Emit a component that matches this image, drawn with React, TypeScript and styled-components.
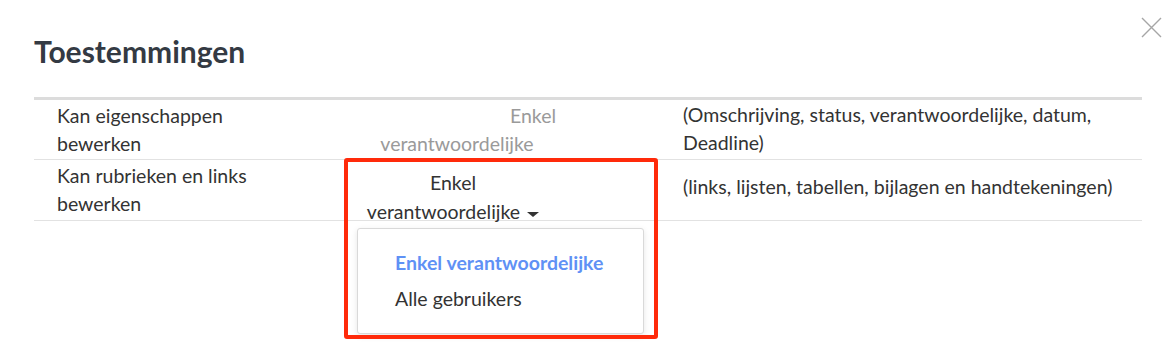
import React from 'react';
import styled, { createGlobalStyle } from 'styled-components';

const GlobalStyle = createGlobalStyle`
  html, body {
    margin: 0;
    padding: 0;
    background: #fff;
  }
  body {
    font-family: Lato, "Open Sans", sans-serif;
    color: #333;
  }
`;

const Modal = styled.div`
  position: relative;
  width: 1174px;
  height: 342px;
  padding: 33px 32px 0 34px;
  box-sizing: border-box;
  background: #fff;
`;

const Title = styled.h2`
  margin: 0 0 28px;
  font-size: 30px;
  line-height: 36px;
  font-weight: 700;
  color: #343a43;
`;

const CloseButton = styled.button`
  position: absolute;
  top: 17px;
  right: 12px;
  width: 21px;
  height: 21px;
  padding: 0;
  border: 0;
  background: none;
  cursor: pointer;
`;

const Table = styled.div`
  border-top: 3px solid #dcdcdc;
`;

const Row = styled.div<{ $height: number }>`
  display: grid;
  grid-template-columns: 276px 360px 1fr;
  align-items: start;
  height: ${(p) => p.$height}px;
  border-bottom: 1px solid #e2e2e2;
  font-size: 19.5px;
  line-height: 28px;
`;

const LabelCell = styled.div`
  padding: 2px 40px 0 23px;
`;

const ValueCell = styled.div<{ $pt: number; $pr: number }>`
  position: relative;
  padding: ${(p) => p.$pt}px ${(p) => p.$pr}px 0 0;
  display: flex;
  justify-content: center;
`;

const ValueText = styled.div<{ $muted?: boolean; $indent?: number }>`
  width: 190px;
  text-align: center;
  color: ${(p) => (p.$muted ? '#9a9a9a' : '#333')};
  text-indent: ${(p) => p.$indent ?? 0}px;
`;

const Trigger = styled(ValueText)`
  line-height: 29px;
  cursor: pointer;
`;

const Caret = styled.span`
  display: inline-block;
  width: 0;
  height: 0;
  margin-left: 7px;
  vertical-align: middle;
  border-left: 6px solid transparent;
  border-right: 6px solid transparent;
  border-top: 5px solid #333;
`;

const NoteCell = styled.div<{ $pt: number }>`
  padding: ${(p) => p.$pt}px 20px 0 13px;
`;

const Menu = styled.ul`
  position: absolute;
  top: 68px;
  left: 47px;
  width: 287px;
  margin: 0;
  padding: 16px 0 16px;
  box-sizing: border-box;
  list-style: none;
  background: #fff;
  border: 1px solid #d9d9d9;
  border-radius: 3px;
  box-shadow: 0 2px 6px rgba(0, 0, 0, 0.1);
  z-index: 2;
`;

const MenuItem = styled.li<{ $active?: boolean }>`
  padding-left: 37px;
  line-height: 36px;
  font-size: 19.5px;
  font-weight: ${(p) => (p.$active ? 700 : 400)};
  color: ${(p) => (p.$active ? '#5f91f5' : '#333')};
  white-space: nowrap;
`;

const Highlight = styled.div`
  position: absolute;
  left: 344px;
  top: 158px;
  width: 314px;
  height: 181px;
  box-sizing: border-box;
  border: 4.5px solid #ff2a0a;
  border-radius: 3px;
  pointer-events: none;
  z-index: 3;
`;

export default function App() {
  return (
    <>
      <GlobalStyle />
      <Modal>
        <CloseButton aria-label="Sluiten">
          <svg width="21" height="21" viewBox="0 0 21 21">
            <path d="M1 1 L20 20 M20 1 L1 20" stroke="#a6a6a6" strokeWidth="1.4" fill="none" />
          </svg>
        </CloseButton>
        <Title>Toestemmingen</Title>
        <Table>
          <Row $height={59}>
            <LabelCell>Kan eigenschappen bewerken</LabelCell>
            <ValueCell $pt={2} $pr={66}>
              <ValueText $muted $indent={148}>
                Enkel verantwoordelijke
              </ValueText>
            </ValueCell>
            <NoteCell $pt={1}>(Omschrijving, status, verantwoordelijke, datum, Deadline)</NoteCell>
          </Row>
          <Row $height={60}>
            <LabelCell>Kan rubrieken en links bewerken</LabelCell>
            <ValueCell $pt={8} $pr={74}>
              <Trigger>
                Enkel verantwoordelijke
                <Caret />
              </Trigger>
              <Menu>
                <MenuItem $active>Enkel verantwoordelijke</MenuItem>
                <MenuItem>Alle gebruikers</MenuItem>
              </Menu>
            </ValueCell>
            <NoteCell $pt={13}>(links, lijsten, tabellen, bijlagen en handtekeningen)</NoteCell>
          </Row>
        </Table>
        <Highlight />
      </Modal>
    </>
  );
}
